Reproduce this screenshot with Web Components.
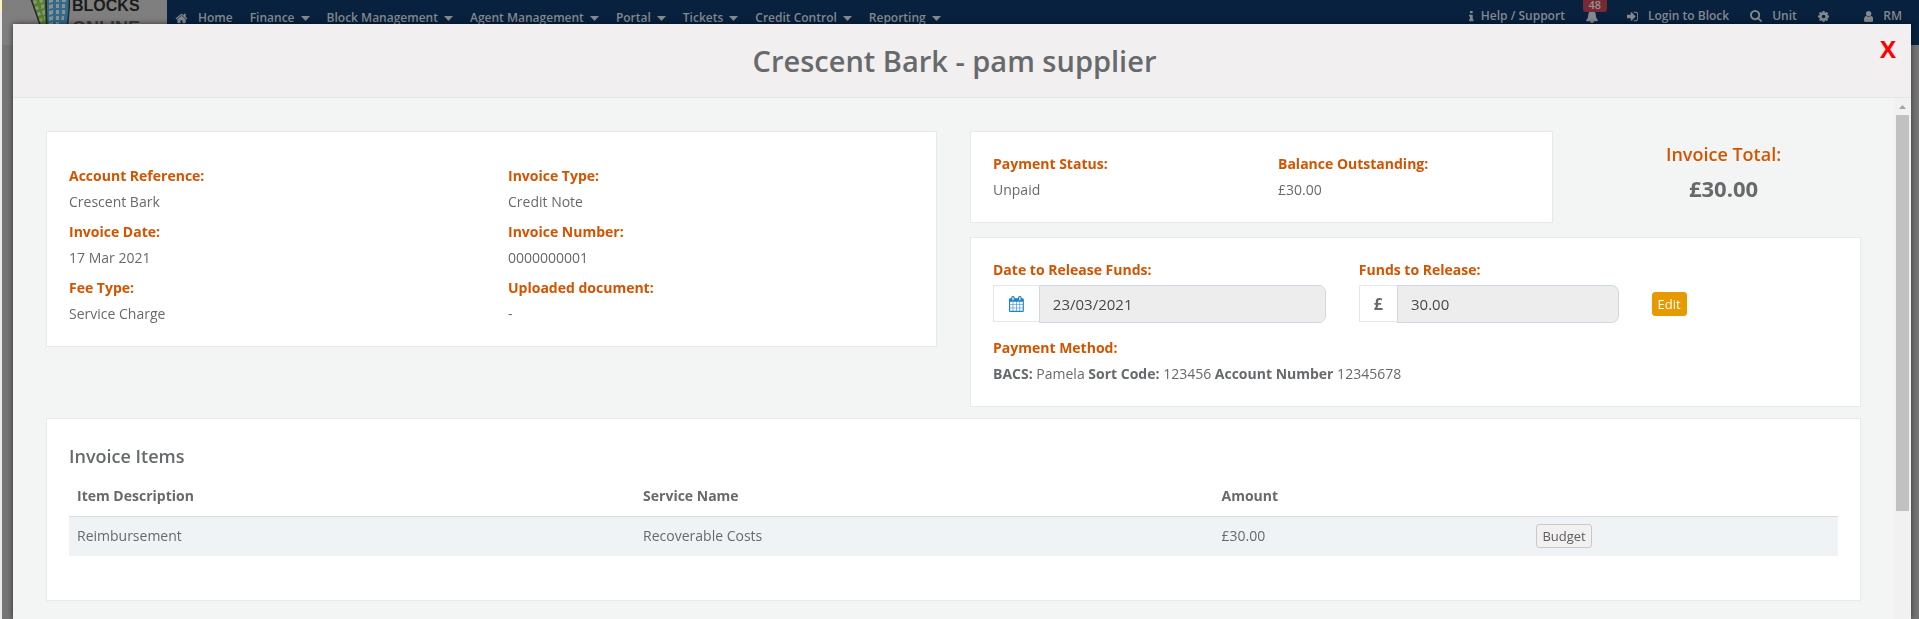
<!DOCTYPE html>
<html lang="en">
<head>
<meta charset="utf-8">
<meta name="viewport" content="width=device-width, initial-scale=1">
<title>Crescent Bark - pam supplier</title>
<style>
	html, body {
		box-sizing: border-box;
		margin: 0;
		height: 100%;
		overflow: hidden;
	}

	body {
		border-left: 2px solid;
		border-image: linear-gradient(#fbf6b8 12px, #ececec 12px) 1;
		color: #676a6c;
		background: #757575;
		font: 14px/20px "Open Sans", "Noto Sans", sans-serif;
	}
</style>
</head>
<body>
	<blocks-topbar></blocks-topbar>

	<blocks-modal>
		<span slot="title">Crescent Bark - pam supplier</span>

		<blocks-card style="--span: 6" tall>
			<blocks-field span="6" label="Account Reference:">Crescent Bark</blocks-field>
			<blocks-field span="6" label="Invoice Type:">Credit Note</blocks-field>
			<blocks-field span="6" label="Invoice Date:">17 Mar 2021</blocks-field>
			<blocks-field span="6" label="Invoice Number:">0000000001</blocks-field>
			<blocks-field span="6" label="Fee Type:">Service Charge</blocks-field>
			<blocks-field span="6" label="Uploaded document:">-</blocks-field>
		</blocks-card>

		<blocks-payment style="--span: 6"></blocks-payment>

		<blocks-items style="--span: 12"></blocks-items>
	</blocks-modal>

<script>
const icons = {
	home: ["0 0 1792 1792", "M1472 992v480q0 26-19 45t-45 19h-384v-384h-256v384h-384q-26 0-45-19t-19-45v-480q0-1 .5-3t.5-3l575-474 575 474q1 2 1 6zm223-69l-62 74q-8 9-21 11h-3q-13 0-21-7l-692-577-692 577q-12 8-24 7-13-2-21-11l-62-74q-8-10-7-23.5t11-21.5l719-599q32-26 76-26t76 26l244 204v-195q0-14 9-23t23-9h192q14 0 23 9t9 23v408l219 182q10 8 11 21.5t-7 23.5z"],
	info: ["576 0 640 1792", "M1216 1344v128q0 26-19 45t-45 19h-512q-26 0-45-19t-19-45v-128q0-26 19-45t45-19h64v-384h-64q-26 0-45-19t-19-45v-128q0-26 19-45t45-19h384q26 0 45 19t19 45v576h64q26 0 45 19t19 45zm-128-1152v192q0 26-19 45t-45 19h-256q-26 0-45-19t-19-45v-192q0-26 19-45t45-19h256q26 0 45 19t19 45z"],
	bell: ["0 0 1792 1792", "M1664 1408q0 52-38 90t-90 38h-448q0 106-75 181t-181 75-181-75-75-181h-448q-52 0-90-38t-38-90q50-42 91-88t85-119.5 74.5-158.5 50-206 19.5-260q0-152 117-282.5t307-158.5q-8-19-8-39 0-40 28-68t68-28 68 28 28 68q0 20-8 39 190 28 307 158.5t117 282.5q0 139 19.5 260t50 206 74.5 158.5 85 119.5 91 88z"],
	login: ["128 0 1536 1792", "M1312 896q0 26-19 45l-544 544q-19 19-45 19t-45-19-19-45v-288h-448q-26 0-45-19t-19-45v-384q0-26 19-45t45-19h448v-288q0-26 19-45t45-19 45 19l544 544q19 19 19 45zm352-352v704q0 119-84.5 203.5t-203.5 84.5h-320q-13 0-22.5-9.5t-9.5-22.5q0-4-1-20t-.5-26.5 3-23.5 10-19.5 20.5-6.5h320q66 0 113-47t47-113v-704q0-66-47-113t-113-47h-312l-11.5-1-11.5-3-8-5.5-7-9-2-13.5q0-4-1-20t-.5-26.5 3-23.5 10-19.5 20.5-6.5h320q119 0 203.5 84.5t84.5 203.5z"],
	search: ["64 128 1664 1664", "M1216 832q0-185-131.5-316.5t-316.5-131.5-316.5 131.5-131.5 316.5 131.5 316.5 316.5 131.5 316.5-131.5 131.5-316.5zm512 832q0 52-38 90t-90 38q-54 0-90-38l-343-342q-179 124-399 124-143 0-273.5-55.5t-225-150-150-225-55.5-273.5 55.5-273.5 150-225 225-150 273.5-55.5 273.5 55.5 225 150 150 225 55.5 273.5q0 220-124 399l343 343q37 37 37 90z"],
	gear: ["128 0 1536 1792", "M1152 896q0-106-75-181t-181-75-181 75-75 181 75 181 181 75 181-75 75-181zm512-109v222q0 12-8 23t-20 13l-185 28q-19 54-39 91 35 50 107 138 10 12 10 25t-9 23q-27 37-99 108t-94 71q-12 0-26-9l-138-108q-44 23-91 38-16 136-29 186-7 28-36 28h-222q-14 0-24.5-8.5t-11.5-21.5l-28-184q-49-16-90-37l-141 107q-10 9-25 9-14 0-25-11-126-114-165-168-7-10-7-23 0-12 8-23 15-21 51-66.5t54-70.5q-27-50-41-99l-183-27q-13-2-21-12.5t-8-23.5v-222q0-12 8-23t19-13l186-28q14-46 39-92-40-57-107-138-10-12-10-24 0-10 9-23 26-36 98.5-107.5t94.5-71.5q13 0 26 10l138 107q44-23 91-38 16-136 29-186 7-28 36-28h222q14 0 24.5 8.5t11.5 21.5l28 184q49 16 90 37l142-107q9-9 24-9 13 0 25 10 129 119 165 170 7 8 7 22 0 12-8 23-15 21-51 66.5t-54 70.5q26 50 41 98l183 28q13 2 21 12.5t8 23.5z"],
	user: ["256 0 1280 1792", "M1536 1399q0 109-62.5 187t-150.5 78h-854q-88 0-150.5-78t-62.5-187q0-85 8.5-160.5t31.5-152 58.5-131 94-89 134.5-34.5q131 128 313 128t313-128q76 0 134.5 34.5t94 89 58.5 131 31.5 152 8.5 160.5zm-256-887q0 159-112.5 271.5t-271.5 112.5-271.5-112.5-112.5-271.5 112.5-271.5 271.5-112.5 271.5 112.5 112.5 271.5z"],
	calendar: ["64 0 1664 1792", "M192 1664h288v-288h-288v288zm352 0h320v-288h-320v288zm-352-352h288v-320h-288v320zm352 0h320v-320h-320v320zm-352-384h288v-288h-288v288zm736 736h320v-288h-320v288zm-384-736h320v-288h-320v288zm768 736h288v-288h-288v288zm-384-352h320v-320h-320v320zm-352-864v-288q0-13-9.5-22.5t-22.5-9.5h-64q-13 0-22.5 9.5t-9.5 22.5v288q0 13 9.5 22.5t22.5 9.5h64q13 0 22.5-9.5t9.5-22.5zm736 864h288v-320h-288v320zm-384-384h320v-288h-320v288zm384 0h288v-288h-288v288zm32-480v-288q0-13-9.5-22.5t-22.5-9.5h-64q-13 0-22.5 9.5t-9.5 22.5v288q0 13 9.5 22.5t22.5 9.5h64q13 0 22.5-9.5t9.5-22.5zm384-64v1280q0 52-38 90t-90 38h-1408q-52 0-90-38t-38-90v-1280q0-52 38-90t90-38h128v-96q0-66 47-113t113-47h64q66 0 113 47t47 113v96h384v-96q0-66 47-113t113-47h64q66 0 113 47t47 113v96h128q52 0 90 38t38 90z"],
	caret: ["0 0 9 5", "M0 0h9L4.500 5z"]
};

class BlocksIcon extends HTMLElement {
	connectedCallback() {
		const [viewBox, path] = icons[this.getAttribute("name")];

		this.attachShadow({ mode: "open" }).innerHTML = `
			<style>
				:host { display: inline-flex; flex: none; }
				svg { height: var(--icon-size, 13px); fill: currentColor; }
			</style>
			<svg viewBox="${viewBox}" aria-hidden="true"><path d="${path}"/></svg>
		`;
	}
}

class BlocksLogo extends HTMLElement {
	connectedCallback() {
		this.attachShadow({ mode: "open" }).innerHTML = `
			<style>
				:host {
					display: flex;
					box-sizing: border-box;
					width: 165px;
					height: 45px;
					padding-left: 27px;
					gap: 2px;
					overflow: hidden;
					background: #7f7f7f;
					color: #1c1c1c;
					font-family: "Liberation Sans", Arial, sans-serif;
				}
				svg { flex: none; width: 41px; height: 45px; }
				.name { display: flex; flex-direction: column; margin-top: -4px; }
				b { font-size: 16px; line-height: 20px; }
				span { color: #3c3c3c; font-size: 18px; line-height: 24px; }
			</style>
			<svg viewBox="0 0 41 45" aria-hidden="true">
				<path d="M1-4h16l1 40h-3z" fill="#55831f" stroke="#262626" stroke-width="1.500"/>
				<path d="M17-4h23.500c0 14-1 26-4 40H18z" fill="#306a8f" stroke="#262626" stroke-width="1.500"/>
				<g fill="#8b918f">
					<path d="M4 1l3-1 1 3-3 1zM10-1l4-1v4l-3 1zM6 7l3-1 1 3-3 1zM12 5l3-1v4l-3 1zM8 13l3-1 1 3-3 1zM13 11l3-1v4l-2 1zM10 19l3-1 1 3-3 1zM15 17l1-1v4l-1 1z"/>
					<path d="M20 0l4-1v3l-4 1zM27-1h3v3h-3zM33-1h4v3h-4zM20 5l4-1v4l-4 1zM27 4h3v4h-3zM33 4h3v4h-3zM20 11l4-1v4l-4 1zM27 10h3v4h-3zM33 10h3v4h-3zM20 17l4-1v4l-4 1zM27 16h3v4h-3zM33 16h2v4h-3zM20 23l4-1v4l-4 1zM27 22h3v4h-3z"/>
				</g>
			</svg>
			<div class="name"><b>BLOCKS</b><span>ONLINE</span></div>
		`;
	}
}

class BlocksTopbar extends HTMLElement {
	connectedCallback() {
		const menus = ["Finance", "Block Management", "Agent Management", "Portal", "Tickets", "Credit Control", "Reporting"];

		this.attachShadow({ mode: "open" }).innerHTML = `
			<style>
				:host {
					display: flex;
					height: 45px;
					background: #08213e;
					color: #84898f;
					font-size: 12px;
					font-weight: 600;
				}
				nav, .tools { display: flex; align-items: center; height: 36px; white-space: nowrap; }
				nav { flex: 1; gap: 17px; padding-left: 8px; }
				.tools { height: 32px; padding-right: 17px; gap: 21px; }
				a { display: inline-flex; align-items: center; gap: 10px; color: inherit; text-decoration: none; }
				nav a.menu { gap: 6px; }
				.menu blocks-icon { --icon-size: 5px; }
				.help { gap: 7px; }
				.bell { position: relative; margin-right: 7px; }
				.user { margin-left: 14px; }
				.badge {
					position: absolute;
					bottom: 11px;
					left: -3px;
					width: 24px;
					border-radius: 0 0 3px 3px;
					background: #762b34;
					color: #9b8d91;
					font-size: 11px;
					line-height: 14px;
					text-align: center;
				}
			</style>
			<blocks-logo></blocks-logo>
			<nav>
				<a href="#home"><blocks-icon name="home"></blocks-icon>Home</a>
				${menus.map((menu) => `<a class="menu" href="#menu">${menu}<blocks-icon name="caret"></blocks-icon></a>`).join("")}
			</nav>
			<div class="tools">
				<a class="help" href="#help"><blocks-icon name="info"></blocks-icon>Help / Support</a>
				<a class="bell" href="#alerts"><blocks-icon name="bell"></blocks-icon><span class="badge">48</span></a>
				<a href="#login"><blocks-icon name="login"></blocks-icon>Login to Block</a>
				<a href="#unit"><blocks-icon name="search" style="--icon-size: 12px"></blocks-icon>Unit</a>
				<a href="#settings" aria-label="Settings"><blocks-icon name="gear"></blocks-icon></a>
				<a class="user" href="#user"><blocks-icon name="user"></blocks-icon>RM</a>
			</div>
		`;
	}
}

class BlocksScrollbar extends HTMLElement {
	connectedCallback() {
		this.attachShadow({ mode: "open" }).innerHTML = `
			<style>
				:host {
					display: flex;
					flex: none;
					flex-direction: column;
					width: 17px;
					align-items: center;
					background: #f1f1f1;
				}
				svg { width: 7px; height: 4px; padding: 7px 0 6px; fill: #a3a3a3; }
				.thumb { width: 13px; height: 76%; background: #c1c1c1; }
			</style>
			<svg viewBox="0 0 7 4"><path d="M0 4h7L3.500 0z"/></svg>
			<div class="thumb"></div>
		`;
	}
}

class BlocksModal extends HTMLElement {
	connectedCallback() {
		this.attachShadow({ mode: "open" }).innerHTML = `
			<style>
				:host {
					position: fixed;
					inset: 24px 8px 0 13px;
					display: flex;
					flex-direction: column;
					background: #f3f5f4;
					box-shadow: 0 0 6px rgba(0, 0, 0, 0.6);
				}
				header {
					display: grid;
					align-items: center;
					height: 73px;
					padding-right: 15px;
					border-bottom: 1px solid #e5e5e5;
					background: #f2eff0;
				}
				h1, button { grid-area: 1 / 1; margin: 0; }
				h1 { font-size: 29px; font-weight: 600; line-height: 40px; text-align: center; }
				button {
					place-self: start end;
					margin-top: 9px;
					padding: 0;
					border: 0;
					background: none;
					color: #f00;
					font: 700 24px/32px "Open Sans", sans-serif;
					cursor: pointer;
				}
				.body { display: flex; flex: 1; min-height: 0; }
				main {
					display: grid;
					flex: 1;
					min-width: 0;
					grid-template-columns: repeat(12, minmax(0, 1fr));
					align-content: start;
					align-items: start;
					gap: 11px 33px;
					padding: 33px;
					overflow: hidden;
				}
				::slotted(*) { grid-column: span var(--span); }
			</style>
			<header>
				<h1><slot name="title"></slot></h1>
				<button type="button" aria-label="Close">X</button>
			</header>
			<div class="body">
				<main><slot></slot></main>
				<blocks-scrollbar></blocks-scrollbar>
			</div>
		`;
	}
}

class BlocksCard extends HTMLElement {
	connectedCallback() {
		this.attachShadow({ mode: "open" }).innerHTML = `
			<style>
				:host {
					display: grid;
					box-sizing: border-box;
					grid-template-columns: repeat(12, minmax(0, 1fr));
					gap: 0 33px;
					padding: 22px 22px 12px;
					border: 1px solid #e7eaec;
					background: #fff;
				}
				:host([tall]) { padding-top: 34px; }
			</style>
			<slot></slot>
		`;
	}
}

class BlocksField extends HTMLElement {
	connectedCallback() {
		this.style.gridColumn = `span ${this.getAttribute("span")}`;
		this.attachShadow({ mode: "open" }).innerHTML = `
			<style>
				:host { display: block; padding-bottom: 9px; }
				.label { color: #d35400; font-weight: 700; line-height: 20px; }
				.value { padding-top: 5px; line-height: 22px; }
			</style>
			<div class="label">${this.getAttribute("label")}</div>
			<div class="value"><slot></slot></div>
		`;
	}
}

class BlocksInput extends HTMLElement {
	connectedCallback() {
		this.style.gridColumn = `span ${this.getAttribute("span")}`;
		this.attachShadow({ mode: "open" }).innerHTML = `
			<style>
				:host { display: block; }
				label { display: block; color: #d35400; font-weight: 700; line-height: 20px; }
				.group { display: flex; align-items: start; margin-top: 5px; }
				.addon {
					display: flex;
					box-sizing: border-box;
					height: 37px;
					align-items: center;
					padding: 0 14px;
					border: 1px solid #e5e6e7;
					border-right: 0;
					color: #676a6c;
					font-size: 16px;
					font-weight: 700;
				}
				input {
					box-sizing: border-box;
					flex: 1;
					min-width: 0;
					height: 38px;
					padding: 0 13px;
					border: 1px solid #cfd9e3;
					border-radius: 0 7px 7px 0;
					background: #ededed;
					color: #43494d;
					font: 15px/22px "Open Sans", sans-serif;
				}
			</style>
			<label for="field">${this.getAttribute("label")}</label>
			<div class="group">
				<span class="addon"><slot></slot></span>
				<input id="field" type="text" value="${this.getAttribute("value")}" readonly>
			</div>
		`;
	}
}

class BlocksButton extends HTMLElement {
	connectedCallback() {
		this.attachShadow({ mode: "open" }).innerHTML = `
			<style>
				:host { display: inline-flex; vertical-align: middle; }
				button {
					height: 24px;
					padding: 0 5px;
					border: 1px solid #c8c8c8;
					border-radius: 3px;
					background: #f2f0f0;
					color: #5b5e60;
					font: 13px/20px "Open Sans", sans-serif;
				}
				:host([warning]) button { border-color: #e69a00; background: #e69a00; color: #fff; }
			</style>
			<button type="button"><slot></slot></button>
		`;
	}
}

class BlocksPayment extends HTMLElement {
	connectedCallback() {
		this.attachShadow({ mode: "open" }).innerHTML = `
			<style>
				:host {
					display: grid;
					grid-template-columns: repeat(12, minmax(0, 1fr));
					gap: 14px 33px;
				}
				.status { grid-column: span 8; }
				.total { grid-column: span 4; padding-top: 10px; text-align: center; font-weight: 700; }
				.total h2 { margin: 0; color: #d35400; font-size: 18px; font-weight: 600; line-height: 26px; }
				.total p { margin: 7px 0 0; font-size: 22px; line-height: 28px; }
				.release { grid-column: span 12; }
				.edit { grid-column: span 3; padding-top: 32px; }
				.method { padding-top: 15px; }
				.date { --icon-size: 16px; color: #1c84c6; padding: 0 1px; }
			</style>
			<blocks-card class="status">
				<blocks-field span="6" label="Payment Status:">Unpaid</blocks-field>
				<blocks-field span="6" label="Balance Outstanding:">£30.00</blocks-field>
			</blocks-card>
			<div class="total">
				<h2>Invoice Total:</h2>
				<p>£30.00</p>
			</div>
			<blocks-card class="release">
				<blocks-input span="5" label="Date to Release Funds:" value="23/03/2021">
					<blocks-icon class="date" name="calendar"></blocks-icon>
				</blocks-input>
				<blocks-input span="4" label="Funds to Release:" value="30.00">£</blocks-input>
				<div class="edit"><blocks-button warning>Edit</blocks-button></div>
				<blocks-field class="method" span="12" label="Payment Method:"><b>BACS:</b> Pamela <b>Sort Code:</b> 123456 <b>Account Number</b> 12345678</blocks-field>
			</blocks-card>
		`;
	}
}

class BlocksItems extends HTMLElement {
	connectedCallback() {
		this.attachShadow({ mode: "open" }).innerHTML = `
			<style>
				:host {
					display: block;
					padding: 23px 22px 44px;
					border: 1px solid #e7eaec;
					background: #fff;
				}
				h2 { margin: 0; font-size: 18px; font-weight: 600; line-height: 28px; }
				table { width: 100%; margin-top: 6px; border-collapse: collapse; table-layout: fixed; }
				th, td { box-sizing: border-box; height: 40px; padding: 0 8px; text-align: left; }
				th { font-weight: 700; border-bottom: 1px solid #d8dcde; }
				td { background: #eff3f6; }
				.item { width: 32%; }
				.service { width: 32.700%; }
				.amount { width: 17.800%; }
			</style>
			<h2>Invoice Items</h2>
			<table>
				<colgroup><col class="item"><col class="service"><col class="amount"><col></colgroup>
				<thead>
					<tr><th>Item Description</th><th>Service Name</th><th>Amount</th><th></th></tr>
				</thead>
				<tbody>
					<tr>
						<td>Reimbursement</td>
						<td>Recoverable Costs</td>
						<td>£30.00</td>
						<td><blocks-button>Budget</blocks-button></td>
					</tr>
				</tbody>
			</table>
		`;
	}
}

customElements.define("blocks-icon", BlocksIcon);
customElements.define("blocks-logo", BlocksLogo);
customElements.define("blocks-topbar", BlocksTopbar);
customElements.define("blocks-scrollbar", BlocksScrollbar);
customElements.define("blocks-button", BlocksButton);
customElements.define("blocks-card", BlocksCard);
customElements.define("blocks-field", BlocksField);
customElements.define("blocks-input", BlocksInput);
customElements.define("blocks-payment", BlocksPayment);
customElements.define("blocks-items", BlocksItems);
customElements.define("blocks-modal", BlocksModal);
</script>
</body>
</html>
